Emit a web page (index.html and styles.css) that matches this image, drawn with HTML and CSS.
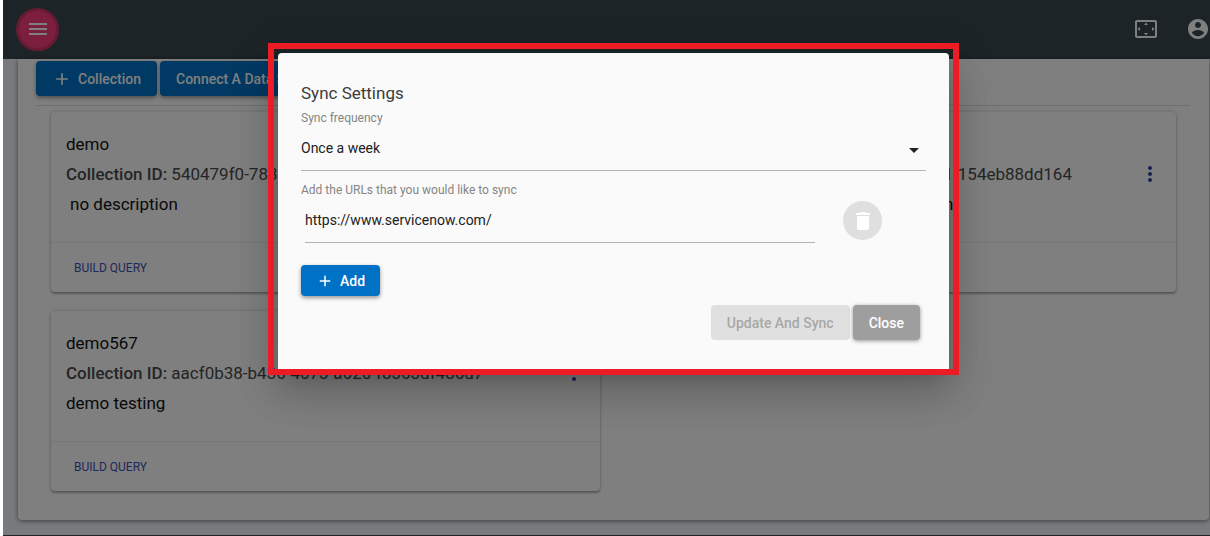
FILE: index.html
```html
<!DOCTYPE html>
<html lang="en">
<head>
  <meta charset="UTF-8">
  <meta name="viewport" content="width=device-width, initial-scale=1.0">
  <title>Sync Settings</title>
  <link rel="stylesheet" href="styles.css">
</head>
<body>
  <div class="app">
    <header class="topbar">
      <button class="menu-btn" aria-label="Menu">
        <svg width="24" height="24" viewBox="0 0 24 24"><path d="M3 18h18v-2H3v2zm0-5h18v-2H3v2zm0-7v2h18V6H3z"/></svg>
      </button>
      <div class="topbar-icons">
        <button class="icon-btn" aria-label="Fullscreen">
          <svg width="24" height="24" viewBox="0 0 24 24"><path d="M12 5.500L10 8h4l-2-2.500zm6 4.500v4l2.500-1.990L18 10zM6 10l-2.500 2.010L6 14v-4zm8 6h-4l2 2.500 2-2.500zm7-13H3c-1.100 0-2 .9-2 2v14c0 1.100.9 2 2 2h18c1.100 0 2-.9 2-2V5c0-1.100-.9-2-2-2zm0 16H3V5h18v14z"/></svg>
        </button>
        <button class="icon-btn" aria-label="Account">
          <svg width="24" height="24" viewBox="0 0 24 24"><path d="M12 2C6.480 2 2 6.480 2 12s4.480 10 10 10 10-4.480 10-10S17.520 2 12 2zm0 3c1.660 0 3 1.340 3 3s-1.340 3-3 3-3-1.340-3-3 1.340-3 3-3zm0 14.200c-2.500 0-4.710-1.280-6-3.220.03-1.990 4-3.080 6-3.080 1.990 0 5.970 1.090 6 3.080-1.290 1.940-3.500 3.220-6 3.220z"/></svg>
        </button>
      </div>
    </header>

    <main class="panel">
      <div class="toolbar">
        <button class="btn btn-primary">
          <svg width="20" height="20" viewBox="0 0 24 24"><path d="M19 13h-6v6h-2v-6H5v-2h6V5h2v6h6v2z"/></svg>
          Collection
        </button>
        <button class="btn btn-primary">Connect A Data Source</button>
      </div>

      <div class="cards">
        <article class="card">
          <div class="card-body">
            <div class="card-text">
              <h2>demo</h2>
              <p class="card-id"><b>Collection ID:</b> 540479f0-7832-4c1e-9a57-3be61f0c92d4</p>
              <p class="indent">no description</p>
            </div>
          </div>
          <div class="card-actions"><button class="link-btn">BUILD QUERY</button></div>
        </article>

        <article class="card">
          <div class="card-body">
            <div class="card-text">
              <h2>demo sync</h2>
              <p class="card-id"><b>Collection ID:</b> 6b0352d8-9487-4d80-b061-154eb88dd164</p>
              <p>web pages collected for the demo site on</p>
            </div>
            <button class="more-btn" aria-label="More">
              <svg width="24" height="24" viewBox="0 0 24 24"><path d="M12 8c1.100 0 2-.9 2-2s-.9-2-2-2-2 .9-2 2 .9 2 2 2zm0 2c-1.100 0-2 .9-2 2s.9 2 2 2 2-.9 2-2-.9-2-2-2zm0 6c-1.100 0-2 .9-2 2s.9 2 2 2 2-.9 2-2-.9-2-2-2z"/></svg>
            </button>
          </div>
          <div class="card-actions"></div>
        </article>

        <article class="card">
          <div class="card-body">
            <div class="card-text">
              <h2>demo567</h2>
              <p class="card-id"><b>Collection ID:</b> aacf0b38-b436-4073-a620-f8363df486d7</p>
              <p>demo testing</p>
            </div>
            <button class="more-btn" aria-label="More">
              <svg width="24" height="24" viewBox="0 0 24 24"><path d="M12 8c1.100 0 2-.9 2-2s-.9-2-2-2-2 .9-2 2 .9 2 2 2zm0 2c-1.100 0-2 .9-2 2s.9 2 2 2 2-.9 2-2-.9-2-2-2zm0 6c-1.100 0-2 .9-2 2s.9 2 2 2 2-.9 2-2-.9-2-2-2z"/></svg>
            </button>
          </div>
          <div class="card-actions"><button class="link-btn">BUILD QUERY</button></div>
        </article>
      </div>
    </main>

    <footer class="footer"></footer>

    <div class="overlay">
      <form class="dialog" role="dialog" aria-labelledby="dialog-title">
        <h1 id="dialog-title">Sync Settings</h1>

        <label for="frequency">Sync frequency</label>
        <div class="select-wrap">
          <select id="frequency">
            <option>Once a week</option>
          </select>
          <svg class="caret" width="10" height="5" viewBox="0 0 10 5"><path d="M0 0h10L5 5z"/></svg>
        </div>

        <label for="url">Add the URLs that you would like to sync</label>
        <div class="url-row">
          <input id="url" type="text" value="https://www.servicenow.com/">
          <button type="button" class="delete-btn" aria-label="Delete" disabled>
            <svg width="24" height="24" viewBox="0 0 24 24"><path d="M6 19c0 1.100.9 2 2 2h8c1.100 0 2-.9 2-2V7H6v12zM19 4h-3.500l-1-1h-5l-1 1H5v2h14V4z"/></svg>
          </button>
        </div>

        <button type="button" class="btn btn-primary btn-small">
          <svg width="18" height="18" viewBox="0 0 24 24"><path d="M19 13h-6v6h-2v-6H5v-2h6V5h2v6h6v2z"/></svg>
          Add
        </button>

        <div class="dialog-actions">
          <button type="button" class="btn btn-disabled" disabled>Update And Sync</button>
          <button type="button" class="btn btn-close">Close</button>
        </div>
        <div class="highlight"></div>
      </form>
    </div>
  </div>
</body>
</html>
```
FILE: styles.css
```css
* {
  box-sizing: border-box;
}
body {
  margin: 0;
  background: white;
  font-family: Roboto, "Liberation Sans", sans-serif;
  overflow: hidden;
}
h1, h2, p {
  margin: 0;
  font-weight: 400;
}
button {
  font-family: inherit;
  border: none;
  background: none;
  padding: 0;
}
svg {
  display: block;
  fill: currentColor;
}
.app {
  position: relative;
  display: flex;
  flex-direction: column;
  min-height: 100vh;
  margin-left: 3px;
  background: #f2f5f9;
}

/* top bar */
.topbar {
  display: flex;
  align-items: center;
  justify-content: space-between;
  height: 59px;
  padding: 0 0 1px 13px;
  background: #3a484e;
  color: white;
}
.menu-btn {
  display: flex;
  align-items: center;
  justify-content: center;
  width: 43px;
  height: 43px;
  border: 3px solid #d03468;
  border-radius: 50%;
  background: #f83e7c;
  color: white;
}
.topbar-icons {
  display: flex;
  gap: 28px;
}
.icon-btn {
  color: white;
}

/* content */
.panel {
  margin: 0 1px 14px 15px;
  padding: 2px 19px 29px 18px;
  background: white;
  border-radius: 0 0 4px 4px;
  box-shadow: 0 1px 5px rgba(0,0,0,0.5);
}
.toolbar {
  display: flex;
  gap: 3px;
  padding-bottom: 9px;
  border-bottom: 1px solid #dcdcdc;
}
.btn {
  display: flex;
  align-items: center;
  justify-content: center;
  gap: 6px;
  height: 35px;
  padding: 0 16px;
  border-radius: 4px;
  font-size: 14px;
  font-weight: 500;
}
.btn-primary {
  background: #0072c6;
  color: white;
  box-shadow: 0 2px 4px rgba(0,0,0,0.4);
}
.cards {
  display: grid;
  grid-template-columns: 1fr 1fr;
  gap: 19px 28px;
  padding: 6px 14px 0 15px;
}
.card {
  border-radius: 4px;
  background: white;
  box-shadow: 0 2px 2px rgba(0,0,0,0.25), 0 0 4px rgba(0,0,0,0.2);
}
.card-body {
  display: flex;
  align-items: center;
  justify-content: space-between;
  height: 131px;
  padding: 0 14px 7px 15px;
  border-bottom: 1px solid #ececec;
}
.card-text {
  color: #111;
  font-size: 17px;
  line-height: 30px;
}
.card-text h2 {
  font-size: 17px;
}
.card-id {
  color: #4a4a4a;
}
.card-id b {
  font-weight: 500;
}
.indent {
  padding-left: 4px;
}
.more-btn {
  color: #3040a0;
}
.card-actions {
  display: flex;
  align-items: center;
  height: 49px;
  padding-left: 23px;
}
.link-btn {
  color: #3f51b5;
  font-size: 12px;
  font-weight: 400;
}
.footer {
  height: 1px;
  margin-top: auto;
  background: #3a484e;
}

/* dialog */
.overlay {
  position: absolute;
  inset: 0;
  display: flex;
  align-items: flex-start;
  justify-content: center;
  padding: 53px 0 0 14px;
  background: rgba(0,0,0,0.5);
}
.dialog {
  position: relative;
  width: 100%;
  max-width: 671px;
  padding: 26px 23px 29px;
  background: #fafafa;
  border-radius: 4px 4px 0 0;
  box-shadow: 0 11px 15px -7px rgba(0,0,0,0.2), 0 24px 38px 3px rgba(0,0,0,0.14), 0 9px 46px 8px rgba(0,0,0,0.12);
}
.dialog h1 {
  color: #3c3c3c;
  font-size: 17px;
  line-height: 28px;
}
.dialog label {
  display: block;
  color: #858585;
  font-size: 12px;
  line-height: 22px;
}
.select-wrap {
  position: relative;
  margin-bottom: 8px;
}
.select-wrap select,
.url-row input {
  width: 100%;
  height: 42px;
  padding: 0 0 3px;
  border: none;
  border-bottom: 1px solid #b4b4b4;
  border-radius: 0;
  background: none;
  color: #212121;
  font-family: inherit;
  font-size: 14px;
  appearance: none;
}
.caret {
  position: absolute;
  right: 7px;
  top: 19px;
  color: #212121;
}
.url-row {
  display: flex;
  align-items: flex-start;
  gap: 28px;
  padding: 0 44px 0 4px;
}
.delete-btn {
  display: flex;
  flex-shrink: 0;
  align-items: center;
  justify-content: center;
  width: 39px;
  height: 39px;
  border-radius: 50%;
  background: #dfdfdf;
  color: white;
}
.btn-small {
  height: 31px;
  margin-top: 22px;
  padding: 0 15px;
}
.dialog-actions {
  display: flex;
  justify-content: flex-end;
  gap: 3px;
  margin: 9px 6px 0 0;
}
.btn-disabled {
  background: #e0e0e0;
  color: #a8a8a8;
}
.btn-close {
  background: #9e9e9e;
  color: white;
  box-shadow: 0 1px 4px rgba(0,0,0,0.4);
}
.highlight {
  position: absolute;
  inset: -10px -10px -6px;
  border: 6px solid #ed1c24;
  pointer-events: none;
}
```
